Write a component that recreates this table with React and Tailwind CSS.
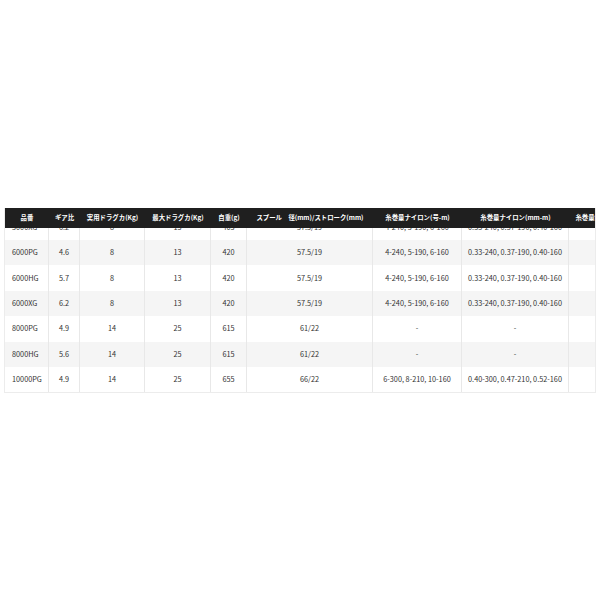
import React from "react";

const cols = "grid grid-cols-[44px_31px_65px_66px_36px_126px_89px_107px_60px]";

const headers = [
  "品番",
  "ギア比",
  "実用ドラグカ(Kg)",
  "最大ドラグカ(Kg)",
  "自重(g)",
  "スプール　径(mm)/ストローク(mm)",
  "糸巻量ナイロン(号-m)",
  "糸巻量ナイロン(mm-m)",
  "糸巻量PE(号-m)",
];

const rows = [
  ["5000XG", "6.2", "8", "13", "405", "57.5/19", "4-240, 5-190, 6-160", "0.33-240, 0.37-190, 0.40-160", ""],
  ["6000PG", "4.6", "8", "13", "420", "57.5/19", "4-240, 5-190, 6-160", "0.33-240, 0.37-190, 0.40-160", ""],
  ["6000HG", "5.7", "8", "13", "420", "57.5/19", "4-240, 5-190, 6-160", "0.33-240, 0.37-190, 0.40-160", ""],
  ["6000XG", "6.2", "8", "13", "420", "57.5/19", "4-240, 5-190, 6-160", "0.33-240, 0.37-190, 0.40-160", ""],
  ["8000PG", "4.9", "14", "25", "615", "61/22", "-", "-", ""],
  ["8000HG", "5.6", "14", "25", "615", "61/22", "-", "-", ""],
  ["10000PG", "4.9", "14", "25", "655", "66/22", "6-300, 8-210, 10-160", "0.40-300, 0.47-210, 0.52-160", ""],
];

export default function App() {
  return (
    <div
      className="w-[600px] h-[600px] bg-white flex flex-col"
      style={{ fontFamily: '"Noto Sans CJK JP", "Noto Sans", sans-serif' }}
    >
      <div className="h-[208px] shrink-0" />
      <div className="ml-[4px] w-[592px] overflow-hidden border-l border-r border-b border-[#ececec]">
        <div className={`${cols} h-[20px] bg-[#1f1f1f] text-white font-bold text-[6.4px] w-max`}>
          {headers.map((h, i) => (
            <div key={i} className="flex items-center justify-center whitespace-nowrap">
              {h}
            </div>
          ))}
        </div>
        <div className="h-[164px] overflow-hidden">
          <div className="-mt-[13.4px] w-max">
            {rows.map((r, ri) => (
              <div
                key={ri}
                className={`${cols} h-[25.4px] text-[7.3px] text-[#333] ${ri % 2 === 1 ? "bg-[#f5f5f5]" : "bg-white"}`}
              >
                {r.map((c, ci) => (
                  <div
                    key={ci}
                    className={`flex items-center justify-center whitespace-nowrap ${ci === 0 ? "justify-start pl-[7px]" : ""} ${ci < 8 ? "border-r border-[#e8e8e8]" : ""}`}
                  >
                    {c}
                  </div>
                ))}
              </div>
            ))}
          </div>
        </div>
      </div>
    </div>
  );
}
